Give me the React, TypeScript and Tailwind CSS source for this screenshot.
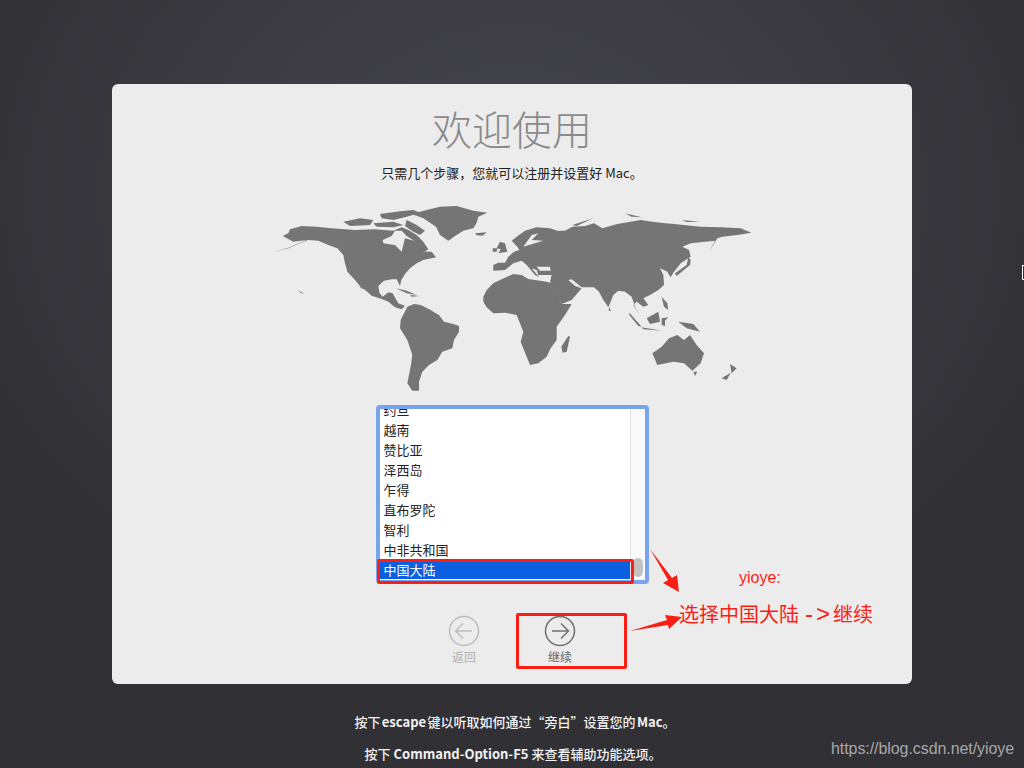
const rows = ["约旦", "越南", "赞比亚", "泽西岛", "乍得", "直布罗陀", "智利", "中非共和国"];

const land = [
  // north america
  "M42,155 L85,145 L120,130 L145,120 L175,122 L205,135 L232,145 L250,165 L255,190 L262,215 L285,240 L300,258 L318,272 L335,287 L365,297 L385,305 L405,322 L425,328 L435,318 L415,310 L408,298 L398,280 L385,277 L368,290 L358,278 L355,258 L372,242 L395,238 L410,238 L420,258 L424,240 L435,222 L450,205 L470,190 L490,180 L528,172 L515,155 L495,155 L480,165 L505,148 L490,125 L470,105 L445,90 L425,82 L400,92 L345,88 L285,90 L215,85 L170,80 L125,78 L90,88 L85,100 L68,108 L100,125 L140,120 L85,143 Z",
  "M250,65 L300,55 L340,60 L330,75 L270,78 Z",
  "M360,42 L420,34 L460,30 L480,38 L440,50 L400,60 L365,55 Z",
  "M340,70 L400,65 L430,75 L400,82 L350,80 Z",
  "M440,60 L470,75 L495,92 L480,105 L455,92 L435,78 Z",
  "M285,230 L310,268 L303,265 Z",
  "M408,265 L440,272 L470,285 L440,280 Z",
  "M450,285 L478,288 L455,290 Z",
  "M112,270 L130,280 L126,281 Z",
  // greenland, iceland, uk
  "M455,42 L500,30 L540,20 L590,18 L640,32 L682,38 L655,50 L650,68 L640,85 L610,92 L585,108 L565,122 L540,105 L528,80 L490,55 Z",
  "M645,100 L680,97 L668,107 L650,106 Z",
  "M720,125 L735,130 L742,155 L715,160 L722,148 L710,145 Z",
  "M698,145 L712,145 L710,155 L698,155 Z",
  // south america
  "M442,320 L462,312 L482,315 L512,330 L525,338 L537,345 L552,365 L580,372 L597,378 L597,395 L582,420 L577,445 L547,455 L532,480 L507,495 L487,515 L477,545 L477,572 L457,572 L442,550 L452,500 L457,465 L442,420 L420,385 L422,360 Z",
  // africa, madagascar
  "M670,290 L680,270 L700,250 L725,238 L760,222 L785,225 L805,237 L860,245 L875,250 L890,280 L905,312 L935,312 L915,345 L890,380 L890,420 L872,445 L860,470 L835,490 L810,495 L800,470 L782,425 L790,395 L770,345 L735,338 L700,340 L680,322 L670,305 Z",
  "M925,408 L930,410 L920,455 L908,458 L904,440 Z",
  // eurasia
  "M700,212 L700,195 L715,188 L735,188 L745,170 L762,155 L778,150 L772,140 L762,130 L755,122 L770,110 L795,92 L830,82 L870,85 L892,92 L915,92 L937,80 L975,78 L1002,70 L1027,85 L1072,72 L1142,60 L1177,65 L1217,70 L1242,72 L1322,80 L1382,82 L1442,85 L1474,98 L1432,105 L1387,110 L1372,115 L1347,155 L1365,122 L1292,130 L1267,140 L1287,150 L1292,170 L1262,190 L1240,218 L1232,232 L1222,215 L1200,205 L1210,225 L1212,255 L1195,270 L1170,285 L1150,295 L1165,315 L1150,320 L1130,305 L1120,315 L1140,345 L1125,320 L1115,290 L1095,275 L1075,272 L1060,285 L1045,322 L1030,300 L1017,275 L1002,262 L965,262 L935,238 L925,240 L945,258 L965,265 L935,300 L905,312 L870,245 L875,225 L835,225 L830,210 L815,205 L838,232 L825,225 L800,195 L785,182 L760,190 L735,210 Z",
  // japan, sakhalin, sri lanka
  "M1250,228 L1290,195 L1292,180 L1285,172 L1280,195 L1245,220 Z",
  "M1048,320 L1052,333 L1046,333 Z",
  // indonesia, philippines, new guinea
  "M1108,338 L1145,380 L1135,378 L1108,345 Z",
  "M1145,382 L1205,392 L1150,388 Z",
  "M1160,355 L1195,335 L1200,365 L1170,372 Z",
  "M1205,355 L1225,352 L1215,362 L1215,378 L1205,375 Z",
  "M1205,290 L1222,310 L1225,330 L1212,320 Z",
  "M1255,365 L1300,372 L1320,395 L1280,385 Z",
  // australia, tasmania, nz
  "M1177,460 L1205,440 L1227,415 L1252,405 L1272,420 L1290,405 L1310,435 L1332,460 L1322,490 L1297,512 L1272,490 L1240,485 L1192,495 Z",
  "M1300,515 L1312,515 L1305,528 Z",
  "M1410,492 L1430,505 L1415,520 Z",
  "M1385,535 L1412,518 L1400,540 Z",
  // arctic russia
  "M937,75 L1000,55 L950,78 Z",
  "M1095,40 L1145,52 L1115,50 Z",
  "M1265,60 L1320,65 L1280,66 Z",
];

const seas = [
  "M368,120 L395,108 L405,92 L425,92 L440,108 L462,122 L435,115 L425,155 L405,135 L370,130 Z",
  "M790,140 L815,105 L835,100 L815,120 L850,122 L825,130 Z",
  "M830,200 L870,200 L872,212 L840,212 Z",
];

function CircleArrow({ dir, color }: { dir: "left" | "right"; color: string }) {
  return (
    <svg width="32" height="32" viewBox="0 0 32 32" fill="none" stroke={color} strokeWidth="1.5">
      <circle cx="16" cy="16" r="14.5" />
      {dir === "right" ? <path d="M8 16 H24 M17 8.5 L24.5 16 L17 23.5" /> : <path d="M24 16 H8 M15 8.5 L7.5 16 L15 23.5" />}
    </svg>
  );
}

export default function App() {
  return (
    <div className="relative flex h-[768px] w-[1024px] flex-col items-center overflow-hidden bg-[radial-gradient(ellipse_600px_500px_at_50%_25%,#46464d,#303035)] font-['Noto_Sans_CJK_SC',sans-serif]">
      <div className="relative mt-[84px] flex h-[600px] w-[800px] flex-col items-center rounded-md bg-[#ececec]">
        <h1 className="mt-[17px] text-[40px] font-light leading-[54px] text-[#8a8a8a]">欢迎使用</h1>
        <p className="mt-[8px] text-[13px] leading-[20px] text-[#222]">只需几个步骤，您就可以注册并设置好 Mac。</p>

        <svg className="ml-[6px] mt-[17px] h-[200px] w-[510px] shrink-0 blur-[0.4px]" viewBox="0 0 1530 600" fill="#757575">
          {land.map((d) => (
            <path key={d} d={d} />
          ))}
          {seas.map((d) => (
            <path key={d} d={d} fill="#ececec" />
          ))}
        </svg>

        <div className="mt-[5px] flex h-[179px] w-[273px] shrink-0 overflow-hidden rounded-[4px] border-4 border-[#78a4ee] bg-white">
          <div className="w-[250px] overflow-hidden text-[13px] leading-[20px] text-[#222]">
            <div className="-mt-[9px]">
              {rows.map((r) => (
                <div key={r} className="h-[20px] pl-[4px]">
                  {r}
                </div>
              ))}
              <div className="mt-[1px] h-[18px] bg-[#0a5fe0] pl-[4px] leading-[18px] text-white">中国大陆</div>
            </div>
          </div>
          <div className="flex w-[15px] flex-col justify-end border-l border-[#e4e4e4] bg-[#fafafa] pb-[3px] pl-[2px]">
            <div className="h-[19px] w-[10px] rounded-[5px] bg-[#c2c2c2]" />
          </div>
        </div>

        <div className="mt-[31px] flex items-start gap-[64px]">
          <div className="flex w-[32px] flex-col items-center gap-[1px]">
            <CircleArrow dir="left" color="#bdbdbd" />
            <span className="whitespace-nowrap text-[12px] leading-[18px] text-[#b0b0b0]">返回</span>
          </div>
          <div className="flex w-[32px] flex-col items-center gap-[1px]">
            <CircleArrow dir="right" color="#707070" />
            <span className="whitespace-nowrap text-[12px] leading-[18px] text-[#666]">继续</span>
          </div>
        </div>

        {/* red annotations drawn over the screenshot */}
        <div className="absolute left-[265px] top-[475px] h-[25px] w-[257px] rounded-[2px] border-[3px] border-[#fa1e14]" />
        <div className="absolute left-[404px] top-[529px] h-[56px] w-[111px] rounded-[2px] border-[3px] border-[#fa1e14]" />
        <svg className="absolute left-[510px] top-[460px]" width="70" height="100" viewBox="510 460 70 100" fill="#fa1e14">
          <path d="M538,465 L560,494 L565,491 L567,508 L551,499 L556,496 Z" />
          <path d="M518,547 L555,536 L553,531 L570,533 L557,545 L556,541 Z" />
        </svg>
        <span className="absolute left-[627px] top-[485px] font-['Liberation_Sans',sans-serif] text-[16px] leading-[18px] text-[#fa1e14]">yioye:</span>
        <span className="absolute left-[567px] top-[516px] whitespace-nowrap text-[20px] leading-[28px] text-[#fa1e14]">
          选择中国大陆<span className="pl-[6px] font-['Liberation_Sans',sans-serif] text-[24px] leading-[20px] tracking-[3px]">-&gt;</span>继续
        </span>
      </div>

      <p className="ml-[6px] mt-[28px] text-[13px] font-medium leading-[20px] text-[#f2f2f2] [word-spacing:-1.5px]">按下 <b>escape</b> 键以听取如何通过“旁白”设置您的 <b>Mac</b>。</p>
      <p className="ml-[2px] mt-[12px] text-[13px] font-medium leading-[20px] text-[#f2f2f2]">按下 <b>Command-Option-F5</b> 来查看辅助功能选项。</p>

      <span className="absolute left-[831px] top-[739px] font-['Liberation_Sans',sans-serif] text-[16px] leading-[20px] tracking-[-0.07px] text-[#a8a8a8]">https://blog.csdn.net/yioye</span>
      <div className="absolute left-[1022px] top-[265px] h-[15px] w-[2px] border-y border-l border-white" />
    </div>
  );
}
